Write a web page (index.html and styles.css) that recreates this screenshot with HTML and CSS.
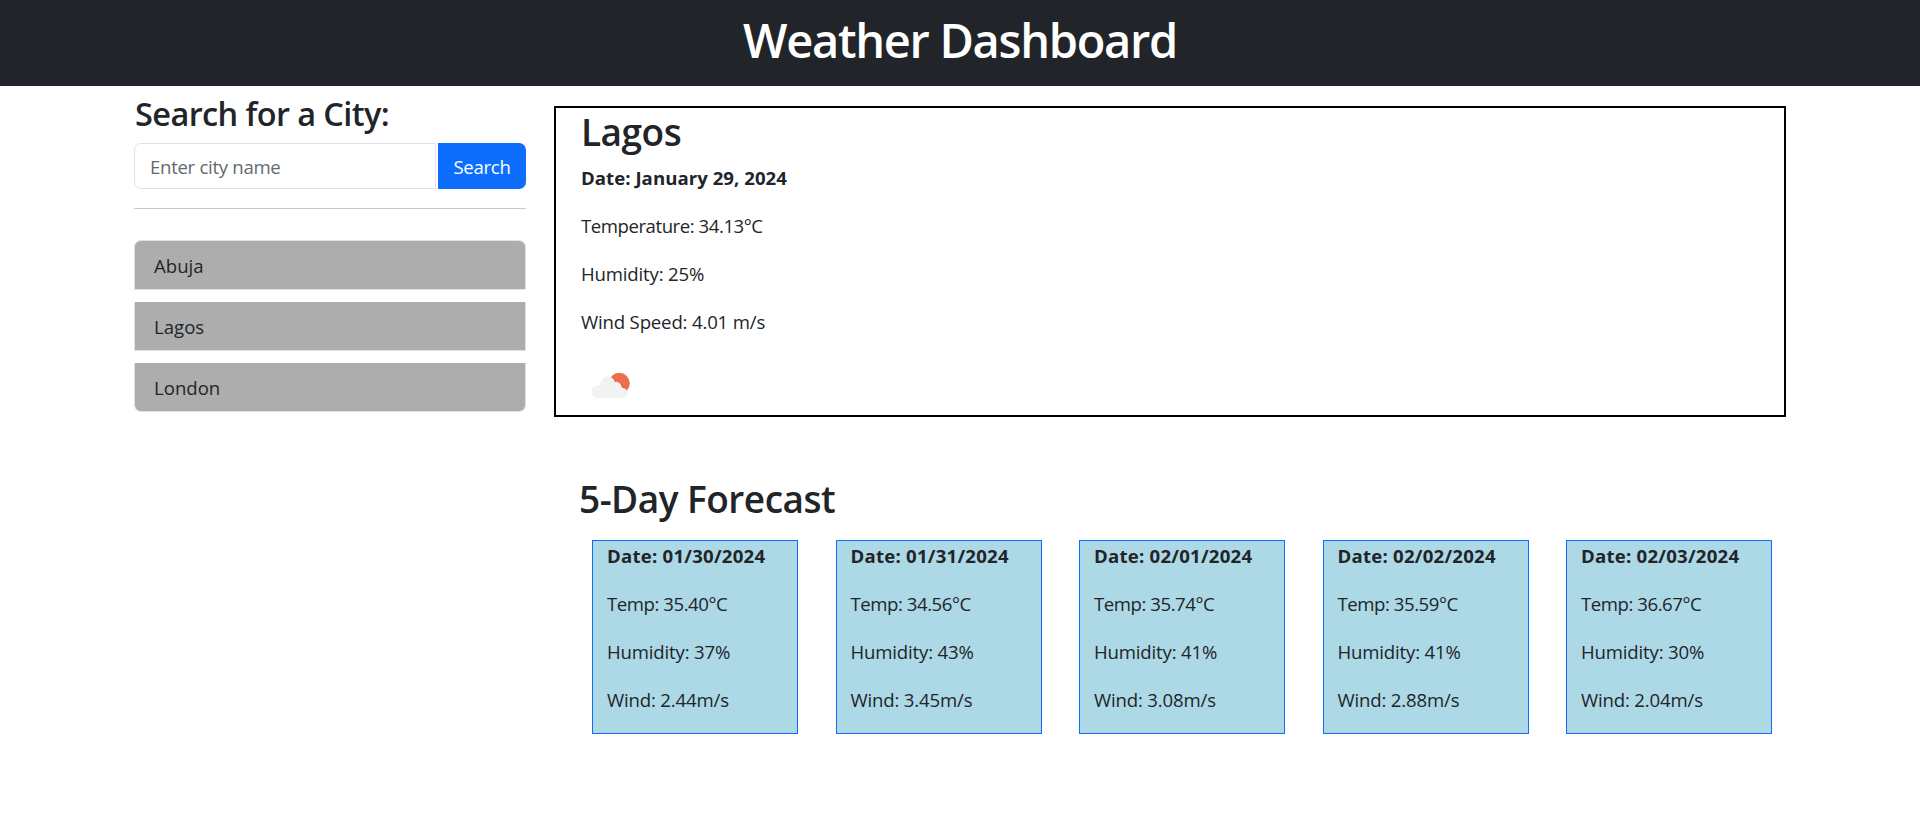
FILE: index.html
```html
<!DOCTYPE html>
<html lang="en">
<head>
<meta charset="utf-8">
<title>Weather Dashboard</title>
<link rel="stylesheet" href="styles.css">
</head>
<body>
<header class="header"><h1 class="title">Weather Dashboard</h1></header>
<main class="layout">
  <aside class="sidebar">
    <h3 class="search-title">Search for a City:</h3>
    <form class="search">
      <input class="search-input" type="text" placeholder="Enter city name">
      <button class="search-button" type="button">Search</button>
    </form>
    <hr class="divider">
    <ul class="history">
      <li class="city">Abuja</li>
      <li class="city">Lagos</li>
      <li class="city">London</li>
    </ul>
  </aside>
  <div class="content">
    <section class="today">
      <h2 class="heading">Lagos</h2>
      <p class="row"><strong>Date: January 29, 2024</strong></p>
      <p class="row temperature">Temperature: 34.13°C</p>
      <p class="row">Humidity: 25%</p>
      <p class="row">Wind Speed: 4.01 m/s</p>
      <svg class="icon" viewBox="0 0 60 60" aria-label="Few clouds">
        <circle cx="38.3" cy="27.3" r="10.5" fill="#ec6e4c"/>
        <path d="M29 25.500c2-2 5.500-1.500 7 1.500 3-.5 5.500 1 6 4 2 0 3.500 1.500 4.200 3.700L40 38 28 32z" fill="#e2502f"/>
        <path d="M15.800 42a6.400 6.400 0 0 1 1.400-12.700c1.200-.1 2 0 2.100-.7.400-4.600 3.300-8.100 7.300-8.100 3.500 0 6.200 2.100 7.200 5.200 3.400-.5 6.700 1.900 6.900 5.300.1.600.7.600 1.300.7a5.200 5.200 0 0 1-.5 10.300z" fill="#f2f2f2"/>
      </svg>
    </section>
    <section class="forecast">
      <h2 class="heading forecast-title">5-Day Forecast</h2>
      <div class="days">
        <article class="day"><p class="row"><strong>Date: 01/30/2024</strong></p><p class="row temperature">Temp: 35.40°C</p><p class="row">Humidity: 37%</p><p class="row">Wind: 2.44m/s</p></article>
        <article class="day"><p class="row"><strong>Date: 01/31/2024</strong></p><p class="row temperature">Temp: 34.56°C</p><p class="row">Humidity: 43%</p><p class="row">Wind: 3.45m/s</p></article>
        <article class="day"><p class="row"><strong>Date: 02/01/2024</strong></p><p class="row temperature">Temp: 35.74°C</p><p class="row">Humidity: 41%</p><p class="row">Wind: 3.08m/s</p></article>
        <article class="day"><p class="row"><strong>Date: 02/02/2024</strong></p><p class="row temperature">Temp: 35.59°C</p><p class="row">Humidity: 41%</p><p class="row">Wind: 2.88m/s</p></article>
        <article class="day"><p class="row"><strong>Date: 02/03/2024</strong></p><p class="row temperature">Temp: 36.67°C</p><p class="row">Humidity: 30%</p><p class="row">Wind: 2.04m/s</p></article>
      </div>
    </section>
  </div>
</main>
</body>
</html>
```
FILE: styles.css
```css
* { box-sizing: border-box; }
body {
  margin: 0;
  background: #fff;
  color: #212529;
  font-family: "Segoe UI", "Open Sans", "Noto Sans", sans-serif;
  font-size: 18.6px;
  line-height: 28.8px;
}
h1, h2, h3, p, ul { margin: 0; padding: 0; }
.header {
  height: 86px;
  padding-top: 12px;
  background: #212529;
  color: #fff;
  text-align: center;
}
.title { font-size: 47px; line-height: 57.6px; font-weight: 600; letter-spacing: -1.3px; }
.layout { display: flex; gap: 28px; padding: 0 134px; }
.sidebar { width: 392px; }
.search-title {
  height: 57px;
  padding: 8px 0 0 1px;
  font-size: 32.5px;
  line-height: 40px;
  font-weight: 600;
  letter-spacing: -0.6px;
}
.search { display: flex; gap: 2px; height: 46px; }
.search-input {
  width: 302px;
  padding: 2px 15px 0;
  border: 1px solid #dee2e6;
  border-radius: 7px 0 0 7px;
  font: inherit;
  letter-spacing: -0.3px;
  color: inherit;
}
.search-input::placeholder { color: #63696e; opacity: 1; }
.search-button {
  width: 88px;
  padding: 2px 0 0;
  border: 0;
  border-radius: 0 7px 7px 0;
  background: #0d6efd;
  color: #fff;
  font: inherit;
  letter-spacing: -0.3px;
}
.divider { margin: 19px 0 31px; border: 0; border-top: 1px solid #c7c8c9; }
.history { display: flex; flex-direction: column; gap: 12px; list-style: none; }
.city {
  height: 49px;
  padding: 11px 19px 0;
  border: 1px solid #dee2e6;
  border-top: 0;
  background: #adadad;
}
.city:first-child { height: 50px; border-top: 1px solid #dee2e6; border-radius: 7px 7px 0 0; }
.city:last-child { border-radius: 0 0 7px 7px; }
.content { flex: 1; }
.today {
  height: 311px;
  margin-top: 20px;
  padding: 1px 0 0 25px;
  border: 2px solid #000;
}
.heading { margin-bottom: 9px; font-size: 37px; line-height: 46px; font-weight: 600; letter-spacing: -0.5px; }
.row { height: 28.8px; margin-bottom: 19.2px; letter-spacing: -0.17px; white-space: nowrap; }
.row strong { font-weight: 700; letter-spacing: 0.04px; }
.temperature { letter-spacing: -0.45px; }
.icon { display: block; width: 60px; height: 60px; }
.forecast { padding: 59px 14px 0 25px; }
.forecast-title { margin-bottom: 18px; }
.days { display: flex; justify-content: space-between; padding-left: 13px; }
.day {
  width: 206px;
  height: 194px;
  padding: 1px 0 0 14px;
  border: 1px solid #0d6efd;
  background: #add8e6;
}
.day strong { letter-spacing: 0.23px; }
```
